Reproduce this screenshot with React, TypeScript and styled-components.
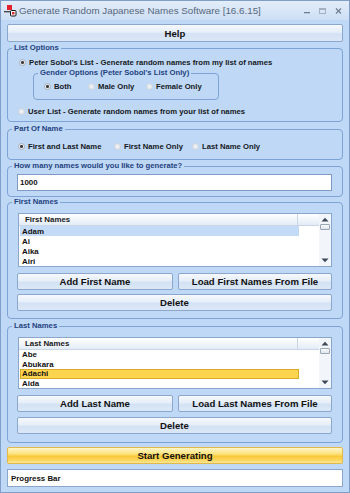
import React from 'react';
import styled, { createGlobalStyle } from 'styled-components';

const Global = createGlobalStyle`
  html, body { margin: 0; padding: 0; background: #bfd8f6; }
  body { font-family: "Liberation Sans", Arial, sans-serif; }
  * { box-sizing: border-box; }
`;

const Window = styled.div`
  width: 350px;
  height: 493px;
  display: flex;
  flex-direction: column;
  background: #bfd8f6;
  border: 1px solid #7f9fc9;
  overflow: hidden;
`;

const TitleBar = styled.div`
  height: 19px;
  flex: none;
  display: flex;
  align-items: center;
  gap: 2px;
  padding: 0 6px 0 3px;
  background: linear-gradient(#e3edf9, #cddff5);
`;

const TitleText = styled.span`
  flex: 1;
  font-size: 9.8px;
  color: #56677d;
  white-space: nowrap;
`;

const Controls = styled.div`
  display: flex;
  align-items: center;
  gap: 7px;
`;

const Body = styled.div`
  flex: 1;
  display: flex;
  flex-direction: column;
  padding: 0 6px;
`;

const Button = styled.div<{ $h?: number; $mt?: number; $w?: number }>`
  height: ${p => p.$h ?? 17}px;
  margin-top: ${p => p.$mt ?? 0}px;
  ${p => (p.$w ? `width: ${p.$w}px; flex: none;` : '')}
  display: flex;
  align-items: center;
  justify-content: center;
  font-size: 9.6px;
  font-weight: bold;
  color: #111;
  border: 1px solid #8ba7cd;
  border-radius: 2px;
  background: linear-gradient(#f6f9fd 0%, #e6eef9 45%, #d3e2f4 55%, #dbe7f6 100%);
  white-space: nowrap;
`;

const GoButton = styled(Button)`
  border-color: #e2b84a;
  background: linear-gradient(#fff6c9 0%, #fde27c 40%, #f9c93a 55%, #fbd65c 80%, #fde79a 100%);
`;

const Group = styled.fieldset<{ $h: number; $mt?: number; $ml?: number; $w?: number }>`
  margin: ${p => p.$mt ?? 0}px 0 0 ${p => p.$ml ?? 0}px;
  padding: 0;
  height: ${p => p.$h}px;
  ${p => (p.$w ? `width: ${p.$w}px;` : '')}
  border: 1px solid #7ea3d6;
  border-radius: 4px;
  display: flex;
  flex-direction: column;
  min-width: 0;
`;

const Legend = styled.legend`
  margin-left: 4px;
  padding: 0 2px;
  font-size: 7.7px;
  line-height: 10px;
  font-weight: bold;
  color: #1f4380;
`;

const RadioRow = styled.div<{ $mt?: number; $pl?: number }>`
  display: flex;
  align-items: center;
  height: 12px;
  margin-top: ${p => p.$mt ?? 0}px;
  padding-left: ${p => p.$pl ?? 10}px;
`;

const RadioItem = styled.label<{ $w?: number }>`
  display: flex;
  align-items: center;
  gap: 3px;
  ${p => (p.$w ? `width: ${p.$w}px; flex: none;` : '')}
  font-size: 7.7px;
  font-weight: bold;
  color: #16181c;
  white-space: nowrap;
`;

const Dot = styled.span<{ $on?: boolean }>`
  width: 7px;
  height: 7px;
  flex: none;
  border-radius: 50%;
  border: 1px solid ${p => (p.$on ? '#aab2bc' : '#d0d6de')};
  background: ${p =>
    p.$on
      ? 'radial-gradient(circle, #3c3c3c 0 1.2px, #e9ecf0 1.8px)'
      : 'radial-gradient(circle, #f1f3f6 0, #dde2e8 100%)'};
`;

const TextInput = styled.div`
  margin: 3px 0 0 9px;
  width: 315px;
  height: 17px;
  background: #fff;
  border: 1px solid #7d9bc6;
  display: flex;
  align-items: center;
  padding-left: 2px;
  font-size: 7.9px;
  font-weight: bold;
  color: #111;
`;

const ListBox = styled.div<{ $h: number }>`
  margin: 6px 0 0 10px;
  width: 314px;
  height: ${p => p.$h}px;
  background: #fff;
  border: 1px solid #8aa6cc;
  display: flex;
  overflow: hidden;
`;

const ListMain = styled.div`
  flex: 1;
  display: flex;
  flex-direction: column;
  min-width: 0;
`;

const ListHeader = styled.div`
  height: 12px;
  flex: none;
  display: flex;
  background: linear-gradient(#ffffff, #e3ecf7);
  border-bottom: 1px solid #c9d6e6;
`;

const HeaderCell = styled.div`
  width: 279px;
  border-right: 1px solid #c9d6e6;
  padding-left: 6px;
  display: flex;
  align-items: center;
  font-size: 7.9px;
  font-weight: bold;
  color: #1a1a1a;
`;

const Row = styled.div<{ $sel?: 'blue' | 'yellow' }>`
  height: 10px;
  width: 279px;
  margin-left: 1px;
  display: flex;
  align-items: center;
  padding-left: 2px;
  font-size: 7.9px;
  font-weight: bold;
  color: #111;
  background: ${p => (p.$sel === 'blue' ? '#c3dbf6' : p.$sel === 'yellow' ? '#fed54e' : 'transparent')};
  ${p => (p.$sel === 'yellow' ? 'outline: 1px solid #d9aa2a; outline-offset: -1px;' : '')}
`;

const ScrollBar = styled.div`
  width: 12px;
  flex: none;
  display: flex;
  flex-direction: column;
  align-items: center;
  background: #f2f5f9;
  padding: 3px 0;
`;

const Thumb = styled.div`
  width: 10px;
  height: 6px;
  margin-top: 2px;
  border: 1px solid #9aa7b7;
  border-radius: 1px;
  background: linear-gradient(#fbfcfd, #dde3ea);
`;

const ScrollSpace = styled.div`
  flex: 1;
`;

const ButtonRow = styled.div<{ $mt?: number }>`
  display: flex;
  gap: 5px;
  margin: ${p => p.$mt ?? 6}px 0 0 9px;
  width: 315px;
`;

const WideButton = styled(Button)`
  margin-left: 9px;
  width: 315px;
`;

const Progress = styled.div`
  margin-top: 5px;
  height: 18px;
  background: #fff;
  border: 1px solid #8aa6cc;
  display: flex;
  align-items: center;
  padding-left: 3px;
  font-size: 7.9px;
  font-weight: bold;
  color: #111;
`;

const Arrow = ({ up }: { up?: boolean }) => (
  <svg width="8" height="5" viewBox="0 0 8 5">
    <path d={up ? 'M0.5 4.5 L4 0.8 L7.5 4.5 Z' : 'M0.5 0.5 L4 4.2 L7.5 0.5 Z'} fill="#3e4a59" />
  </svg>
);

const AppIcon = () => (
  <svg width="13" height="13" viewBox="0 0 13 13">
    <rect x="3" y="1" width="5" height="5" fill="#e4202a" />
    <rect x="0" y="7" width="9" height="1.4" fill="#4a4a4a" />
    <rect x="6.5" y="6.5" width="5.5" height="5.5" rx="1" fill="#fff" stroke="#111" strokeWidth="1" />
    <rect x="8" y="8" width="2.5" height="2.5" fill="#d8262e" />
  </svg>
);

type ListProps = { title: string; h: number; rows: { t: string; sel?: 'blue' | 'yellow' }[] };

const NameList = ({ title, h, rows }: ListProps) => (
  <ListBox $h={h}>
    <ListMain>
      <ListHeader>
        <HeaderCell>{title}</HeaderCell>
      </ListHeader>
      {rows.map(r => (
        <Row key={r.t} $sel={r.sel}>
          {r.t}
        </Row>
      ))}
    </ListMain>
    <ScrollBar>
      <Arrow up />
      <Thumb />
      <ScrollSpace />
      <Arrow />
    </ScrollBar>
  </ListBox>
);

export default function App() {
  return (
    <>
      <Global />
      <Window>
        <TitleBar>
          <AppIcon />
          <TitleText>Generate Random Japanese Names Software [16.6.15]</TitleText>
          <Controls>
            <svg width="8" height="8" viewBox="0 0 8 8">
              <rect x="1" y="5" width="6" height="1.3" fill="#6f7f94" />
            </svg>
            <svg width="9" height="8" viewBox="0 0 9 8">
              <rect x="1.5" y="1.5" width="6" height="5" fill="none" stroke="#a4b1c2" strokeWidth="1" />
              <rect x="1.5" y="1.5" width="6" height="1.5" fill="#a4b1c2" />
            </svg>
            <svg width="9" height="8" viewBox="0 0 9 8">
              <path d="M2 1.5 L7 6.5 M7 1.5 L2 6.5" stroke="#6f7f94" strokeWidth="1.2" />
            </svg>
          </Controls>
        </TitleBar>
        <Body>
          <Button $h={18} $mt={4}>Help</Button>

          <Group $h={79} $mt={1}>
            <Legend>List Options</Legend>
            <RadioRow $mt={3} $pl={11}>
              <RadioItem>
                <Dot $on />
                Peter Sobol's List - Generate random names from my list of names
              </RadioItem>
            </RadioRow>
            <Group $h={32} $ml={25} $w={186}>
              <Legend>Gender Options (Peter Sobol's List Only)</Legend>
              <RadioRow $mt={2} $pl={10}>
                <RadioItem $w={44}>
                  <Dot $on />
                  Both
                </RadioItem>
                <RadioItem $w={58}>
                  <Dot />
                  Male Only
                </RadioItem>
                <RadioItem>
                  <Dot />
                  Female Only
                </RadioItem>
              </RadioRow>
            </Group>
            <RadioRow $mt={5} $pl={10}>
              <RadioItem>
                <Dot />
                User List - Generate random names from your list of names
              </RadioItem>
            </RadioRow>
          </Group>

          <Group $h={36} $mt={2}>
            <Legend>Part Of Name</Legend>
            <RadioRow $mt={6} $pl={10}>
              <RadioItem $w={96}>
                <Dot $on />
                First and Last Name
              </RadioItem>
              <RadioItem $w={78}>
                <Dot />
                First Name Only
              </RadioItem>
              <RadioItem>
                <Dot />
                Last Name Only
              </RadioItem>
            </RadioRow>
          </Group>

          <Group $h={36} $mt={1}>
            <Legend>How many names would you like to generate?</Legend>
            <TextInput>1000</TextInput>
          </Group>

          <Group $h={122} $mt={0}>
            <Legend>First Names</Legend>
            <NameList
              title="First Names"
              h={54}
              rows={[{ t: 'Adam', sel: 'blue' }, { t: 'Ai' }, { t: 'Aika' }, { t: 'Airi' }]}
            />
            <ButtonRow $mt={6}>
              <Button $w={156}>Add First Name</Button>
              <Button $w={154}>Load First Names From File</Button>
            </ButtonRow>
            <WideButton $mt={4}>Delete</WideButton>
          </Group>

          <Group $h={122} $mt={2}>
            <Legend>Last Names</Legend>
            <NameList
              title="Last Names"
              h={52}
              rows={[{ t: 'Abe' }, { t: 'Abukara' }, { t: 'Adachi', sel: 'yellow' }, { t: 'Aida' }]}
            />
            <ButtonRow $mt={6}>
              <Button $w={156}>Add Last Name</Button>
              <Button $w={154}>Load Last Names From File</Button>
            </ButtonRow>
            <WideButton $mt={5}>Delete</WideButton>
          </Group>

          <GoButton $mt={4}>Start Generating</GoButton>
          <Progress>Progress Bar</Progress>
        </Body>
      </Window>
    </>
  );
}
